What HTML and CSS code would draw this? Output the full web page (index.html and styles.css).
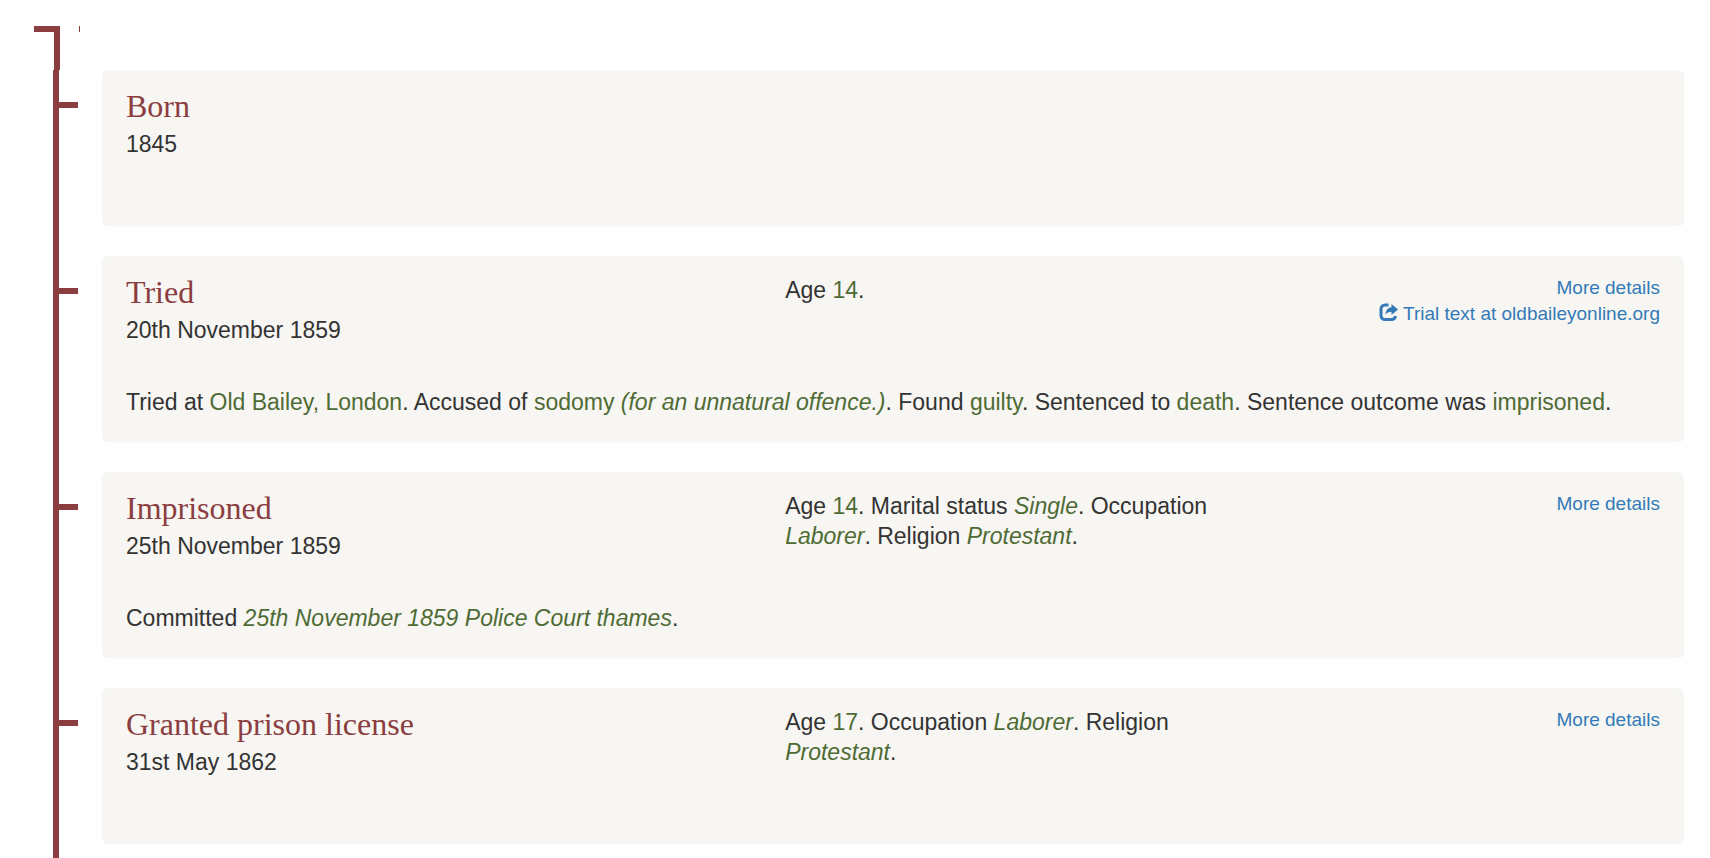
FILE: index.html
```html
<!DOCTYPE html>
<html lang="en">
<head>
<meta charset="utf-8">
<meta name="viewport" content="width=device-width, initial-scale=1">
<title>Life events</title>
<link rel="stylesheet" href="styles.css">
</head>
<body>
<div class="line-start"><span class="line-cap"></span><span class="line-speck"></span></div>
<ol class="timeline">
  <li class="event">
    <article class="card">
      <div class="card-head">
        <div class="col"><h2 class="title">Born</h2><p class="date">1845</p></div>
      </div>
    </article>
  </li>
  <li class="event">
    <article class="card">
      <div class="card-head">
        <div class="col"><h2 class="title">Tried</h2><p class="date">20th November 1859</p></div>
        <p class="col facts">Age <span class="value">14</span>.</p>
        <div class="col links">
          <a href="#tried">More details</a>
          <a href="#trial-text"><svg class="icon" viewBox="0 0 19 19" aria-hidden="true"><path d="M9.500 2H6A4 4 0 0 0 2 6v6.500a4 4 0 0 0 4 4h6.500a4 4 0 0 0 4-3.500" fill="none" stroke="currentColor" stroke-width="3"/><path d="M12.500 1 19 6.500 12.500 12V8.700C10 8.700 8 9.500 6.500 11.500 6.800 7.200 8.700 4.500 12.500 4.200Z" fill="currentColor"/></svg> Trial text at oldbaileyonline.org</a>
        </div>
      </div>
      <p class="summary">Tried at <span class="value">Old Bailey, London</span>. Accused of <span class="value">sodomy <em>(for an unnatural offence.)</em></span>. Found <span class="value">guilty</span>. Sentenced to <span class="value">death</span>. Sentence outcome was <span class="value">imprisoned</span>.</p>
    </article>
  </li>
  <li class="event">
    <article class="card">
      <div class="card-head">
        <div class="col"><h2 class="title">Imprisoned</h2><p class="date">25th November 1859</p></div>
        <p class="col facts">Age <span class="value">14</span>. Marital status <em class="value">Single</em>. Occupation <em class="value">Laborer</em>. Religion <em class="value">Protestant</em>.</p>
        <div class="col links"><a href="#imprisoned">More details</a></div>
      </div>
      <p class="summary">Committed <em class="value">25th November 1859 Police Court thames</em>.</p>
    </article>
  </li>
  <li class="event">
    <article class="card">
      <div class="card-head">
        <div class="col"><h2 class="title">Granted prison license</h2><p class="date">31st May 1862</p></div>
        <p class="col facts">Age <span class="value">17</span>. Occupation <em class="value">Laborer</em>. Religion <em class="value">Protestant</em>.</p>
        <div class="col links"><a href="#license">More details</a></div>
      </div>
    </article>
  </li>
</ol>
</body>
</html>
```

FILE: styles.css
```css
* { box-sizing: border-box; }

body {
  display: flex;
  flex-direction: column;
  min-height: 100vh;
  margin: 0;
  padding: 26px 26px 0 34px;
  background: #fff;
  color: #333;
  font: 23px/30px "Liberation Sans", Arial, sans-serif;
}

h2, p { margin: 0; }

.line-start {
  display: flex;
  align-items: flex-start;
  gap: 19px;
}

.line-cap {
  width: 26px;
  height: 44px;
  border: solid #8b3d3f;
  border-width: 6px 6px 0 0;
}

.line-speck {
  width: 1px;
  height: 6px;
  background: #8b3d3f;
}

.timeline {
  flex: 1;
  margin: 0 0 0 19px;
  padding: 0;
  border-left: 6px solid #8b3d3f;
  list-style: none;
}

.event {
  display: flex;
  align-items: flex-start;
  gap: 24px;
  padding-bottom: 31px;
}

.event:last-child { padding-bottom: 0; }

.event::before {
  content: "";
  width: 19px;
  height: 6px;
  margin-top: 32px;
  background: #8b3d3f;
}

.card {
  flex: 1;
  padding: 18px 0 24px;
  border-radius: 6px;
  background: #f7f6f2;
  box-shadow: 0 1px 1px rgba(0, 0, 0, 0.05);
}

.card-head {
  display: grid;
  grid-template-columns: minmax(0, 5fr) minmax(0, 4fr) minmax(0, 3fr);
  margin-bottom: 42px;
}

.col,
.summary { padding: 0 24px; }

.title {
  margin-bottom: 5px;
  color: #8b3d3f;
  font: 32px/36px "Liberation Serif", "Times New Roman", serif;
}

.facts,
.links { padding-top: 1px; }

.value { color: #4f6b35; }

.links {
  display: flex;
  flex-direction: column;
  align-items: flex-end;
  font-size: 19px;
  line-height: 26px;
}

.links a {
  color: #337ab7;
  text-decoration: none;
}

.links a:hover { text-decoration: underline; }

.icon {
  width: 19px;
  height: 19px;
  vertical-align: -2px;
}
```
